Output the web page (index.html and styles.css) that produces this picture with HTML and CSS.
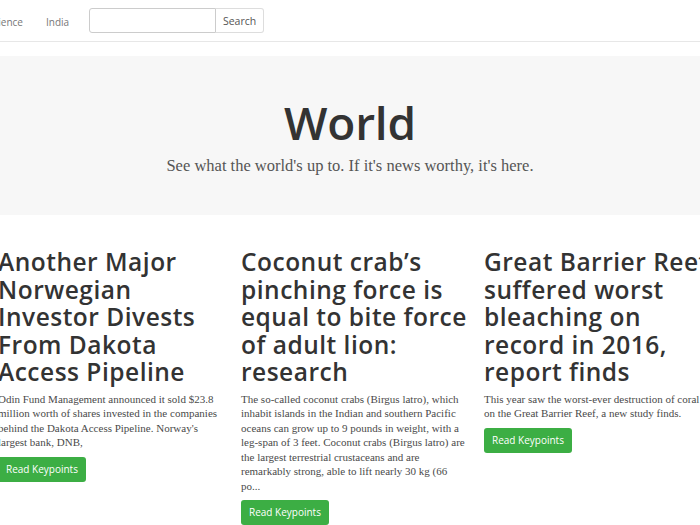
FILE: index.html
```html
<!DOCTYPE html>
<html>
<head>
<meta charset="utf-8">
<link rel="stylesheet" href="styles.css">
</head>
<body>
<nav class="navbar">
  <ul class="nav-links">
    <li><a href="#">Science</a></li>
    <li><a href="#">India</a></li>
  </ul>
  <form class="search">
    <input type="text" class="search-input">
    <button type="button" class="search-btn">Search</button>
  </form>
</nav>
<header class="jumbotron">
  <h1>World</h1>
  <p class="lead">See what the world's up to. If it's news worthy, it's here.</p>
</header>
<main class="articles">
  <article class="card">
    <h2>Another Major Norwegian Investor Divests From Dakota Access Pipeline</h2>
    <p>Odin Fund Management announced it sold $23.8 million worth of shares invested in the companies behind the Dakota Access Pipeline. Norway's largest bank, DNB,</p>
    <a class="btn" href="#">Read Keypoints</a>
  </article>
  <article class="card">
    <h2>Coconut crab’s pinching force is equal to bite force of adult lion: research</h2>
    <p>The so-called coconut crabs (Birgus latro), which inhabit islands in the Indian and southern Pacific oceans can grow up to 9 pounds in weight, with a leg-span of 3 feet. Coconut crabs (Birgus latro) are the largest terrestrial crustaceans and are remarkably strong, able to lift nearly 30 kg (66 po...</p>
    <a class="btn" href="#">Read Keypoints</a>
  </article>
  <article class="card">
    <h2>Great Barrier Reef suffered worst bleaching on record in 2016, report finds</h2>
    <p>This year saw the worst-ever destruction of coral on the Great Barrier Reef, a new study finds.</p>
    <a class="btn" href="#">Read Keypoints</a>
  </article>
</main>
</body>
</html>
```
FILE: styles.css
```css
html, body {
  margin: 0;
  padding: 0;
  background: #fff;
  overflow: hidden;
}
body {
  font-family: "Liberation Serif", Georgia, serif;
  color: #555;
  width: 700px;
}
.navbar {
  height: 41px;
  border-bottom: 1px solid #e7e7e7;
  display: flex;
  align-items: center;
  margin-bottom: 14px;
}
.nav-links {
  list-style: none;
  margin: 0 0 0 -12px;
  padding: 0;
  display: flex;
  gap: 23px;
}
.nav-links a {
  font-family: "Open Sans", sans-serif;
  font-size: 10px;
  color: #777;
  text-decoration: none;
}
.search {
  display: flex;
  margin-left: 20px;
}
.search-input {
  width: 127px;
  height: 25px;
  box-sizing: border-box;
  border: 1px solid #ccc;
  border-radius: 3px 0 0 3px;
  margin: 0;
  padding: 0 6px;
}
.search-btn {
  height: 25px;
  width: 48px;
  box-sizing: border-box;
  border: 1px solid #ddd;
  border-left: none;
  border-radius: 0 3px 3px 0;
  background: #fff;
  font-family: "Open Sans", sans-serif;
  font-size: 10.5px;
  color: #555;
  padding: 0;
}
.jumbotron {
  background: #f7f7f7;
  height: 159px;
  box-sizing: border-box;
  text-align: center;
  padding-top: 38px;
}
.jumbotron h1 {
  font-family: "Open Sans", sans-serif;
  font-weight: 600;
  font-size: 46px;
  line-height: 56px;
  color: #333;
  margin: 0;
  letter-spacing: -0.2px;
}
.lead {
  font-size: 16.5px;
  margin: 4px 0 0;
  line-height: 24px;
  color: #555;
}
.articles {
  display: grid;
  grid-template-columns: 228px 228px 228px;
  column-gap: 15px;
  margin-left: -2px;
  width: 714px;
  padding-top: 33px;
  align-items: start;
}
.card h2 {
  font-family: "Open Sans", sans-serif;
  font-weight: 600;
  font-size: 24.5px;
  line-height: 27.5px;
  color: #333;
  margin: 0 0 6px;
  letter-spacing: 0.5px;
}
.card p {
  font-size: 11px;
  line-height: 14.5px;
  margin: 0 0 7px;
  color: #4a4a4a;
}
.btn {
  display: inline-block;
  background: #3cae44;
  color: #fff;
  font-family: "Open Sans", sans-serif;
  font-size: 10px;
  line-height: 25px;
  padding: 0 8px;
  border-radius: 3px;
  text-decoration: none;
}
```
